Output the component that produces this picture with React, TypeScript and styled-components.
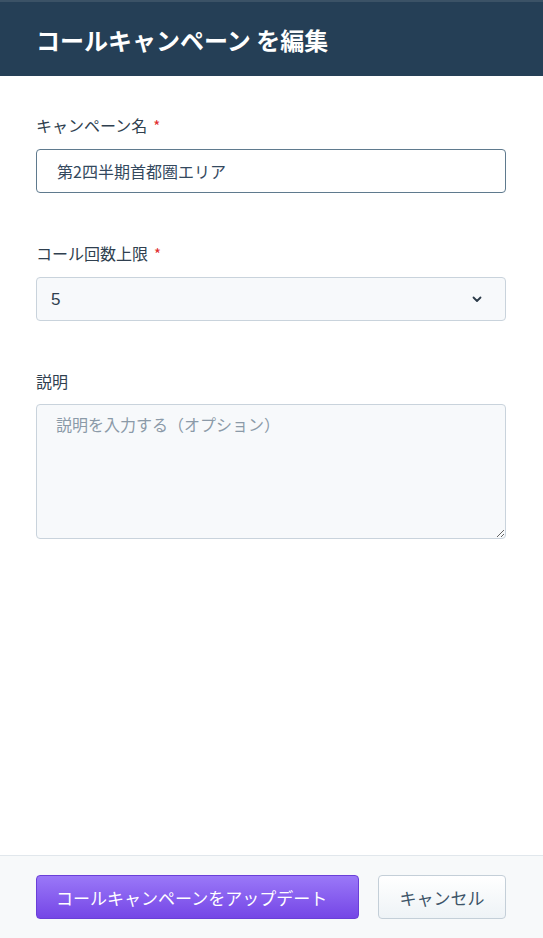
import React from 'react';
import styled, { createGlobalStyle } from 'styled-components';

const GlobalStyle = createGlobalStyle`
  * {
    box-sizing: border-box;
  }
  html, body {
    margin: 0;
    padding: 0;
    background: #ffffff;
  }
  body {
    font-family: 'Noto Sans CJK JP', 'Noto Sans', sans-serif;
    color: #2f3f4f;
  }
`;

const limitOptions = ['1', '2', '3', '4', '5', '6', '7', '8', '9', '10'];

const EditCampaign = () => {
  return (
    <Page>
      <GlobalStyle />
      <Header>
        <Title>コールキャンペーン を編集</Title>
      </Header>
      <Body>
        <Field>
          <Label>
            キャンペーン名<Required>*</Required>
          </Label>
          <TextInput type="text" defaultValue="第2四半期首都圏エリア" autoFocus />
        </Field>
        <Field>
          <Label>
            コール回数上限<Required>*</Required>
          </Label>
          <SelectWrap>
            <Select defaultValue="5">
              {limitOptions.map(n => (
                <option value={n} key={n}>
                  {n}
                </option>
              ))}
            </Select>
            <Chevron width="12" height="12" viewBox="0 0 12 12">
              <path
                d="M2.5 4.5 L6 8 L9.5 4.5"
                fill="none"
                stroke="#2b3a48"
                strokeWidth="1.8"
                strokeLinecap="round"
                strokeLinejoin="round"
              />
            </Chevron>
          </SelectWrap>
        </Field>
        <Field>
          <Label>説明</Label>
          <TextArea placeholder="説明を入力する（オプション）" />
        </Field>
      </Body>
      <Footer>
        <PrimaryButton>コールキャンペーンをアップデート</PrimaryButton>
        <SecondaryButton>キャンセル</SecondaryButton>
      </Footer>
    </Page>
  );
};

export default function App() {
  return <EditCampaign />;
}

const Page = styled.div`
  display: flex;
  flex-direction: column;
  min-height: 100vh;
`;

const Header = styled.header`
  height: 76px;
  display: flex;
  align-items: center;
  padding: 0 36px;
  background: #253f56;
  border-top: 2px solid #3b5266;
`;

const Title = styled.h1`
  margin: 0;
  font-size: 24px;
  font-weight: 700;
  color: #ffffff;
`;

const Body = styled.main`
  flex: 1;
  display: flex;
  flex-direction: column;
  gap: 48px;
  padding: 37px 37px 0 36px;
`;

const Field = styled.div`
  display: flex;
  flex-direction: column;
`;

const Label = styled.label`
  font-size: 16px;
  line-height: 24px;
  color: #2f3f4f;
  margin-bottom: 11px;
`;

const Required = styled.span`
  color: #e02b2b;
  margin-left: 6px;
  font-size: 15px;
`;

const TextInput = styled.input`
  height: 44px;
  width: 100%;
  padding: 0 20px;
  font-family: inherit;
  font-size: 16px;
  color: #34495e;
  background: #ffffff;
  border: 1px solid #5f7a8e;
  border-radius: 4px;
  outline: none;
  caret-color: #2f3f4f;
`;

const SelectWrap = styled.div`
  position: relative;
  width: 100%;
`;

const Select = styled.select`
  appearance: none;
  width: 100%;
  height: 44px;
  padding: 0 14px;
  font-family: 'Liberation Sans', 'Noto Sans CJK JP', sans-serif;
  font-size: 17px;
  color: #2f3f4f;
  background: #f7f9fb;
  border: 1px solid #c9d3dc;
  border-radius: 4px;
  outline: none;
`;

const Chevron = styled.svg`
  position: absolute;
  right: 23px;
  top: 16px;
  pointer-events: none;
`;

const TextArea = styled.textarea`
  width: 100%;
  height: 135px;
  padding: 7px 19px;
  font-family: inherit;
  font-size: 16px;
  line-height: 24px;
  color: #2f3f4f;
  background: #f7f9fb;
  border: 1px solid #c9d3dc;
  border-radius: 4px;
  outline: none;
  resize: vertical;
  &::placeholder {
    color: #8b9aa8;
  }
`;

const Footer = styled.footer`
  display: flex;
  align-items: center;
  gap: 19px;
  padding: 19px 36px 19px;
  background: #f7f9fa;
  border-top: 1px solid #e1e7ec;
`;

const PrimaryButton = styled.button`
  height: 44px;
  width: 323px;
  padding: 0 0 0 19px;
  text-align: left;
  font-family: inherit;
  font-size: 17px;
  color: #ffffff;
  background: linear-gradient(180deg, #9a78f8 0%, #7546e6 100%);
  border: 1px solid #6a3fd8;
  border-radius: 4px;
  cursor: pointer;
`;

const SecondaryButton = styled.button`
  height: 44px;
  width: 128px;
  font-family: inherit;
  font-size: 17px;
  color: #3d5468;
  background: linear-gradient(180deg, #ffffff 0%, #eef3f6 100%);
  border: 1px solid #c4cfd8;
  border-radius: 4px;
  cursor: pointer;
`;
